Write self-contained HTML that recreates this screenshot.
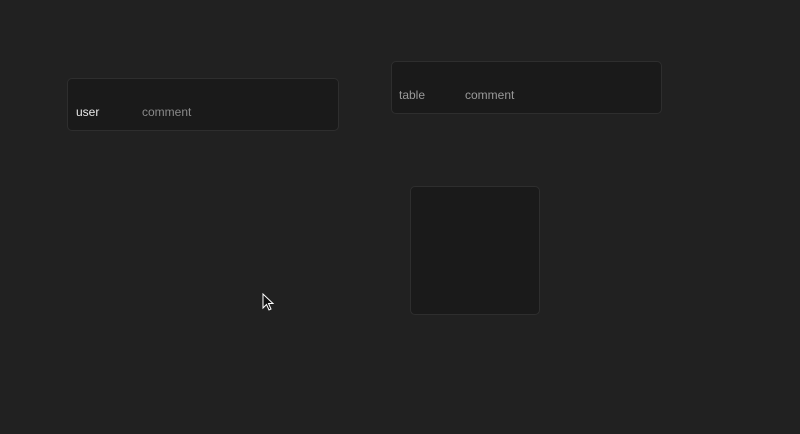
<!DOCTYPE html>
<html><head><style>
body{margin:0;width:800px;height:434px;background:#212121;position:relative;overflow:hidden;font-family:"Liberation Sans",sans-serif;font-size:12px}
.b{position:absolute;background:#1a1a1a;border:1px solid #2e2e2e;border-radius:5px;box-sizing:border-box}
.t{position:absolute}
</style></head><body>
<div class="b" style="left:67px;top:78px;width:272px;height:53px"></div>
<div class="t" style="left:76px;top:105px;color:#e8e8e8">user</div>
<div class="t" style="left:142px;top:105px;color:#8a8a8a">comment</div>
<div class="b" style="left:391px;top:61px;width:271px;height:53px"></div>
<div class="t" style="left:399px;top:88px;color:#9a9a9a">table</div>
<div class="t" style="left:465px;top:88px;color:#9a9a9a">comment</div>
<div class="b" style="left:410px;top:186px;width:130px;height:129px"></div>
<svg style="position:absolute;left:262px;top:293px" width="14" height="20" viewBox="0 0 14 20"><path d="M1 1 L1 15 L4.5 11.5 L7 17 L9 16 L6.5 10.5 L11 10.5 Z" fill="#111" stroke="#fff" stroke-width="1"/></svg>
</body></html>
